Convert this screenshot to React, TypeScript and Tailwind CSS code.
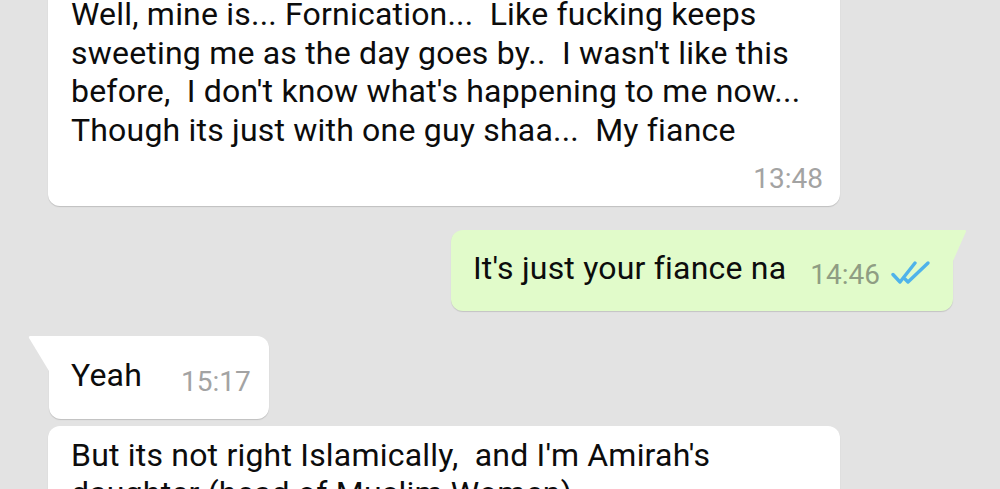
import React from "react";

const Ticks = () => (
  <svg width="42" height="26" viewBox="0 0 42 26" fill="none" className="ml-[11px] mb-[2px] shrink-0">
    <path d="M2 15.5 L9 23 L24 4" stroke="#4fb3ea" strokeWidth="3.4" strokeLinecap="round" strokeLinejoin="round" />
    <path d="M14 20 L17 23 L37 4" stroke="#4fb3ea" strokeWidth="3.4" strokeLinecap="round" strokeLinejoin="round" />
  </svg>
);

export default function App() {
  return (
    <div
      className="h-[489px] w-full overflow-hidden bg-[#e3e3e3] text-[#0c0c0c]"
      style={{ fontFamily: "Roboto, 'Noto Sans', sans-serif" }}
    >
      <div className="flex flex-col">
        {/* long incoming message */}
        <div className="ml-[48px] mt-[-25px] w-[792px] rounded-[12px] bg-white pl-[23px] pr-[17px] pt-[20px] pb-[12.5px] shadow-[0_1px_1px_rgba(0,0,0,0.16)]">
          <p className="whitespace-pre-wrap text-[32px] leading-[38.5px] tracking-[0.2px]">
            {"Well, mine is... Fornication...  Like fucking keeps\nsweeting me as the day goes by..  I wasn't like this\nbefore,  I don't know what's happening to me now...\nThough its just with one guy shaa...  My fiance"}
          </p>
          <div className="mt-[16px] flex justify-end">
            <span className="text-[28px] leading-none text-[#a3a3a3]">13:48</span>
          </div>
        </div>

        {/* outgoing */}
        <div className="relative mr-[47px] mt-[24px] self-end rounded-[12px] rounded-tr-none bg-[#e1fbca] pl-[22px] pr-[20px] pt-[19px] pb-[23.5px] shadow-[0_1px_1px_rgba(0,0,0,0.14)]">
          <svg width="14" height="32" viewBox="0 0 14 32" className="absolute left-full top-0">
            <path d="M0 0 H11.5 Q14 0 12.6 2.6 L0 31 Z" fill="#e1fbca" />
          </svg>
          <div className="flex items-end">
            <span className="whitespace-pre text-[32px] leading-[38.5px] tracking-[0.2px]">It's just your fiance na</span>
            <span className="ml-[24px] mb-[-2px] text-[28px] leading-none text-[#8f9d83]">14:46</span>
            <Ticks />
          </div>
        </div>

        {/* Yeah */}
        <div className="relative ml-[49px] mt-[25px] self-start rounded-[12px] rounded-tl-none bg-white pl-[22px] pr-[18px] pt-[20px] pb-[24.5px] shadow-[0_1px_1px_rgba(0,0,0,0.16)]">
          <svg width="21" height="36" viewBox="0 0 21 36" className="absolute right-full top-0">
            <path d="M21 0 H2.5 Q0 0 1.2 2.2 L21 35 Z" fill="#ffffff" />
          </svg>
          <div className="flex items-end">
            <span className="text-[32px] leading-[38.5px] tracking-[0.2px]">Yeah</span>
            <span className="ml-[39px] mb-[-2px] text-[28px] leading-none text-[#a3a3a3]">15:17</span>
          </div>
        </div>

        {/* next incoming */}
        <div className="ml-[48px] mt-[7px] w-[792px] rounded-[12px] bg-white pl-[23px] pr-[17px] pt-[10px] pb-[12px] shadow-[0_1px_1px_rgba(0,0,0,0.16)]">
          <p className="whitespace-pre-wrap text-[32px] leading-[38.5px] tracking-[0.2px]">
            {"But its not right Islamically,  and I'm Amirah's\n"}
            <span className="flex items-end justify-between">
              <span>daughter (head of Muslim Women)</span>
              <span className="mb-[-4px] text-[28px] leading-none text-[#a3a3a3]">15:18</span>
            </span>
          </p>
        </div>
      </div>
    </div>
  );
}
